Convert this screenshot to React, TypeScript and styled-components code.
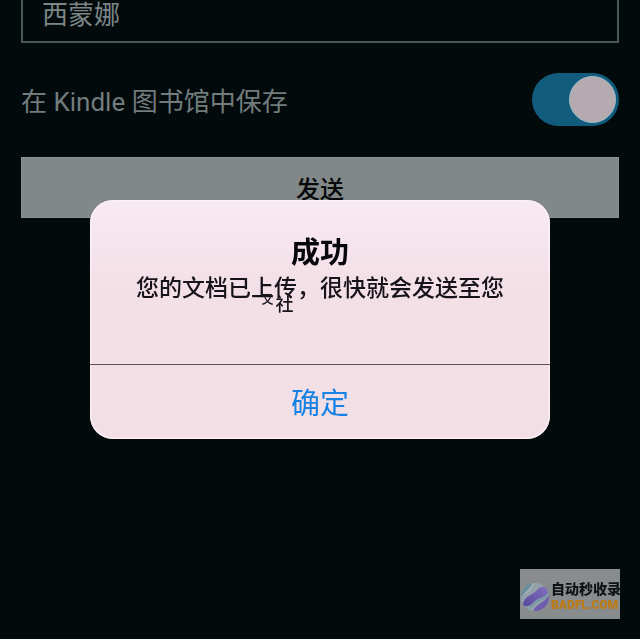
import React from "react";
import styled, { createGlobalStyle } from "styled-components";

const GlobalStyle = createGlobalStyle`
  *, *::before { box-sizing: border-box; }
  body {
    margin: 0;
    background: #020a0c;
    font-family: "Noto Sans CJK SC", "Noto Sans", sans-serif;
  }
  button, input { font: inherit; }
`;

const Page = styled.main`
  min-height: 100vh;
  padding: 0 21px;
  display: flex;
  flex-direction: column;
`;

const NameInput = styled.input`
  width: 100%;
  height: 43px;
  padding: 0 19px 17px;
  border: 2px solid #48575a;
  border-top: 0;
  border-radius: 0;
  background: transparent;
  color: #7c8687;
  font-size: 26px;
  font-weight: 400;
  line-height: 24px;
  outline: none;
`;

const SaveRow = styled.label`
  margin: 30px 0 31px;
  display: flex;
  align-items: center;
  justify-content: space-between;
  color: #727c7d;
  font-family: Roboto, "Noto Sans CJK SC", sans-serif;
  font-size: 26px;
  font-weight: 400;
  line-height: 40px;
`;

const SaveLabel = styled.span`
  padding-top: 5px;
`;

const Switch = styled.input`
  appearance: none;
  flex: none;
  width: 87px;
  height: 53px;
  margin: 0;
  padding: 0 3px;
  display: flex;
  align-items: center;
  border-radius: 27px;
  background: #115b7d;

  &::before {
    content: "";
    width: 47px;
    height: 47px;
    border: 1px solid #a3bdc7;
    border-radius: 50%;
    background: #b4aab0;
  }
  &:checked { justify-content: flex-end; }
`;

const SendButton = styled.button`
  width: 100%;
  height: 61px;
  padding: 0;
  border: 1px solid #8b9192;
  background: #828788;
  color: #06090a;
  font-size: 24px;
  font-weight: 500;
`;

const Overlay = styled.div`
  position: fixed;
  inset: 0;
  display: flex;
  align-items: center;
  justify-content: center;
`;

const Dialog = styled.section`
  width: 72%;
  overflow: hidden;
  border-radius: 23px;
  background: linear-gradient(#f8e9f2, #f3dfe6 38%, #f2dfe6);
  box-shadow: inset 0 0 2px 1px #fff5fb;
  text-align: center;
`;

const DialogBody = styled.div`
  height: 164px;
  padding-top: 30px;
`;

const Title = styled.h1`
  margin: 0;
  color: #08070b;
  font-size: 29px;
  font-weight: 700;
  line-height: 40px;
`;

const Message = styled.p`
  position: relative;
  margin: 0;
  color: #17131a;
  font-size: 23px;
  font-weight: 500;
  line-height: 32px;
  white-space: nowrap;
`;

const Remnant = styled.span`
  position: absolute;
  left: 172px;
  top: 23px;
  display: flex;
  gap: 2px;
  font-size: 18px;
  font-weight: 500;
  line-height: 20px;

  small {
    font-size: 12px;
    line-height: 12px;
  }
`;

const ConfirmButton = styled.button`
  width: 100%;
  height: 75px;
  padding: 0 0 2px;
  border: 0;
  border-top: 1px solid #5d555b;
  background: transparent;
  color: #1682e6;
  font-size: 29px;
  font-weight: 400;
`;

const SiteBadge = styled.aside`
  position: fixed;
  right: 20px;
  bottom: 20px;
  width: 100px;
  height: 50px;
  display: flex;
  align-items: center;
  background: #888c8d;

  svg { flex: none; }
`;

const BadgeText = styled.div`
  padding-top: 5px;
  display: flex;
  flex-direction: column;
  gap: 1px;
  font-size: 14px;
  font-weight: 900;
  line-height: 16px;
  color: #101316;
  white-space: nowrap;
`;

const Domain = styled.span`
  color: #bd7a12;
  font-family: Roboto, "Liberation Sans", sans-serif;
  font-size: 12px;
  font-weight: 900;
`;

function BadgeLogo() {
  return (
    <svg width="31" height="50" viewBox="0 0 31 50" aria-hidden="true">
      <defs>
        <clipPath id="disc"><circle cx="15" cy="28" r="14" /></clipPath>
        <linearGradient id="violet" x1="0" y1="1" x2="1" y2="0">
          <stop offset="0" stopColor="#55489a" />
          <stop offset="1" stopColor="#8570c0" />
        </linearGradient>
      </defs>
      <g clipPath="url(#disc)">
        <rect y="13" width="31" height="30" fill="#93a1aa" />
        <path d="M0 31C2 23 10 22 14 13H0Z" fill="#688f9d" />
        <path d="M5 25C9 22 12 19 14 13" fill="none" stroke="#a3b0b7" strokeWidth="2" />
        <path d="M3 36C4 26 13 27 18 20C21 17 25 17 29 20C29 29 18 28 14 33C11 37 6 39 3 36Z" fill="url(#violet)" />
        <path d="M13 43C15 34 25 35 30 24V43Z" fill="#6e5daa" />
        <path d="M10 40C12 32 22 32 27 26" fill="none" stroke="#7898a8" strokeWidth="2" />
      </g>
    </svg>
  );
}

export default function App() {
  return (
    <>
      <GlobalStyle />
      <Page>
        <NameInput aria-label="姓名" defaultValue="西蒙娜" />
        <SaveRow>
          <SaveLabel>在 Kindle 图书馆中保存</SaveLabel>
          <Switch type="checkbox" role="switch" defaultChecked />
        </SaveRow>
        <SendButton type="button">发送</SendButton>
      </Page>
      <Overlay>
        <Dialog role="alertdialog" aria-labelledby="title" aria-describedby="message">
          <DialogBody>
            <Title id="title">成功</Title>
            <Message id="message">
              您的文档已上传，很快就会发送至您
              <Remnant aria-hidden="true"><small>又</small>社</Remnant>
            </Message>
          </DialogBody>
          <ConfirmButton type="button">确定</ConfirmButton>
        </Dialog>
      </Overlay>
      <SiteBadge>
        <BadgeLogo />
        <BadgeText>
          <span>自动秒收录</span>
          <Domain>BADFL.COM</Domain>
        </BadgeText>
      </SiteBadge>
    </>
  );
}
